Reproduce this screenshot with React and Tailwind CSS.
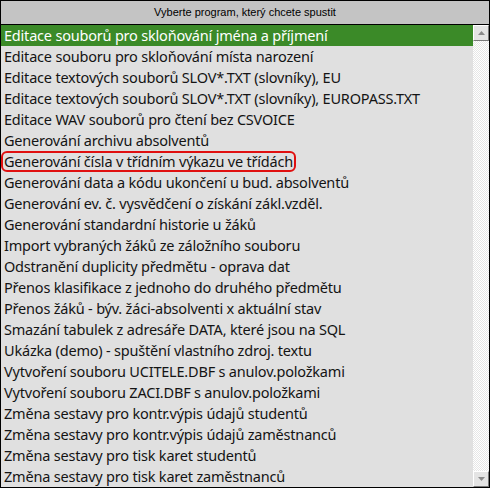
import React from 'react';

const items = [
  'Editace souborů pro skloňování jména a příjmení',
  'Editace souboru pro skloňování místa narození',
  'Editace textových souborů SLOV*.TXT (slovníky), EU',
  'Editace textových souborů SLOV*.TXT (slovníky), EUROPASS.TXT',
  'Editace WAV souborů pro čtení bez CSVOICE',
  'Generování archivu absolventů',
  'Generování čísla v třídním výkazu ve třídách',
  'Generování data a kódu ukončení u bud. absolventů',
  'Generování ev. č. vysvědčení o získání zákl.vzděl.',
  'Generování standardní historie u žáků',
  'Import vybraných žáků ze záložního souboru',
  'Odstranění duplicity předmětu - oprava dat',
  'Přenos klasifikace z jednoho do druhého předmětu',
  'Přenos žáků - býv. žáci-absolventi x aktuální stav',
  'Smazání tabulek z adresáře DATA, které jsou na SQL',
  'Ukázka (demo) - spuštění vlastního zdroj. textu',
  'Vytvoření souboru UCITELE.DBF s anulov.položkami',
  'Vytvoření souboru ZACI.DBF s anulov.položkami',
  'Změna sestavy pro kontr.výpis údajů studentů',
  'Změna sestavy pro kontr.výpis údajů zaměstnanců',
  'Změna sestavy pro tisk karet studentů',
  'Změna sestavy pro tisk karet zaměstnanců',
];

function ArrowButton({ down }) {
  return (
    <div className="w-[16px] h-[16px] bg-[#e4e4e4] border border-t-white border-l-white border-r-[#7a7a7a] border-b-[#7a7a7a] flex items-center justify-center">
      <svg width="7" height="4" viewBox="0 0 7 4">
        {down ? (
          <path d="M0 0h7L3.5 4z" fill="#8a8a8a" />
        ) : (
          <path d="M0 4h7L3.5 0z" fill="#8a8a8a" />
        )}
      </svg>
    </div>
  );
}

export default function App() {
  return (
    <div className="w-[490px] h-[488px] bg-white border border-black flex flex-col overflow-hidden font-['Noto_Sans',sans-serif]">
      <div className="h-[24px] shrink-0 bg-[#c4c4c4] border-b border-black flex items-center justify-center text-[11px] text-black font-['Liberation_Sans',sans-serif]">
        Vyberte program, který chcete spustit
      </div>
      <div className="flex flex-1 min-h-0">
        <ul className="flex-1 bg-[#e0e0e0]">
          {items.map((item, i) => (
            <li
              key={item}
              className={
                'h-[21px] pl-[3px] flex items-center text-[14.5px] tracking-[-0.2px] whitespace-nowrap leading-none ' +
                (i === 0 ? 'bg-[#3b8a28] text-white' : 'text-[#141414]')
              }
            >
              {i === 6 ? (
                <span className="outline-2 outline-[#e01010] outline-offset-[1px] rounded-[3px]">{item}</span>
              ) : (
                item
              )}
            </li>
          ))}
        </ul>
        <div className="w-[16px] flex flex-col justify-between bg-[repeating-conic-gradient(#ffffff_0_25%,#e6e6e6_0_50%)] bg-[length:2px_2px]">
          <ArrowButton />
          <ArrowButton down />
        </div>
      </div>
    </div>
  );
}
